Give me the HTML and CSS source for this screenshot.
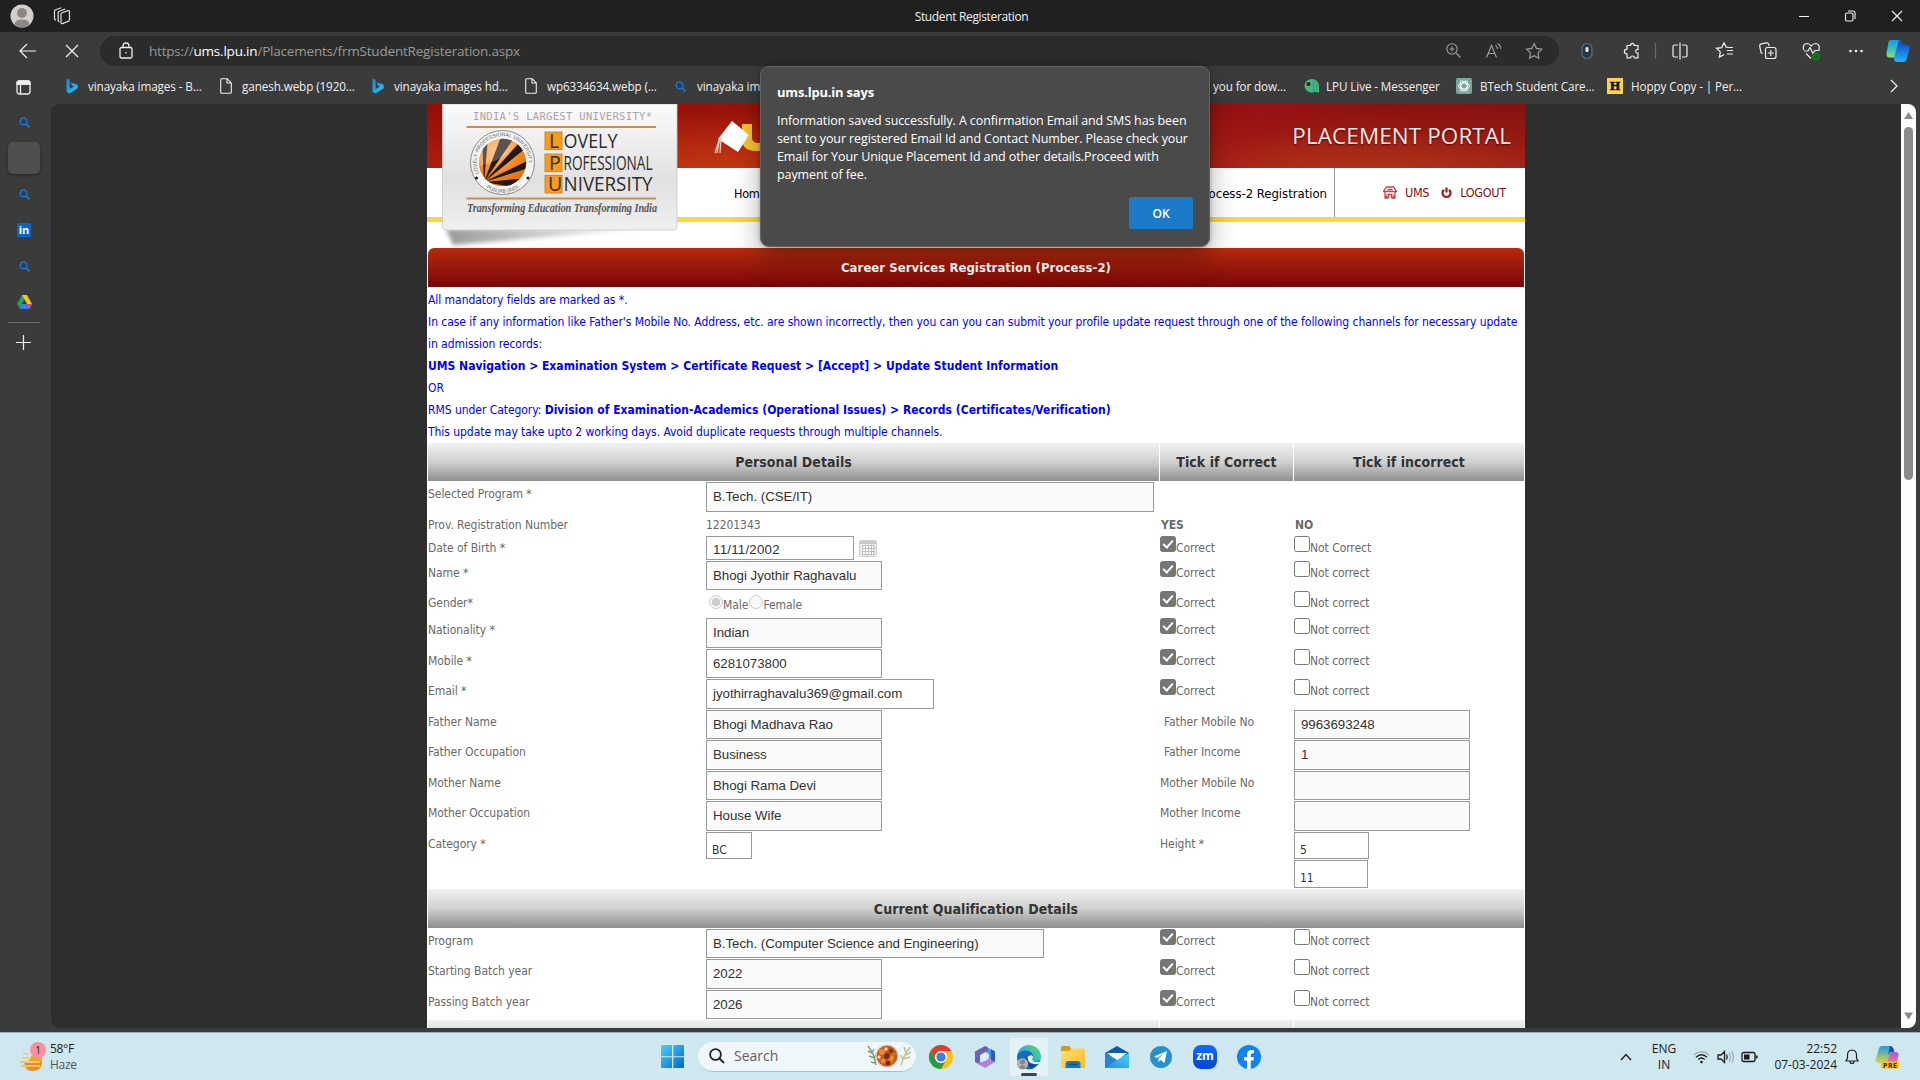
FILE: index.html
```html
<!DOCTYPE html>
<html lang="en">
<head>
<meta charset="utf-8">
<title>Student Registeration</title>
<link rel="stylesheet" href="styles.css">
</head>
<body>
<svg class="defs" width="0" height="0" aria-hidden="true">
  <defs>
    <linearGradient id="gBing" x1="0" y1="0" x2="1" y2="1"><stop offset="0" stop-color="#2a7de8"/><stop offset=".5" stop-color="#1fa4ee"/><stop offset="1" stop-color="#35d0f0"/></linearGradient>
    <linearGradient id="gCard" x1="0" y1="0" x2="0" y2="1"><stop offset="0" stop-color="#fcfbfc"/><stop offset=".6" stop-color="#e2e0e2"/><stop offset="1" stop-color="#f0f0f0"/></linearGradient>
    <radialGradient id="gBall" cx=".4" cy=".3" r=".8"><stop offset="0" stop-color="#ffbd75"/><stop offset=".5" stop-color="#f78a22"/><stop offset="1" stop-color="#e06406"/></radialGradient>
    <linearGradient id="gShade" x1="0" y1="0" x2="1" y2="0"><stop offset="0" stop-color="#777" stop-opacity=".75"/><stop offset="1" stop-color="#999" stop-opacity=".1"/></linearGradient>
    <linearGradient id="gWin" x1="0" y1="0" x2="1" y2="1"><stop offset="0" stop-color="#4cd0fb"/><stop offset="1" stop-color="#0069c8"/></linearGradient>
    <linearGradient id="gEdge" x1="0" y1="1" x2="1" y2="0"><stop offset="0" stop-color="#1173c9"/><stop offset=".5" stop-color="#27b3d9"/><stop offset="1" stop-color="#66dc52"/></linearGradient>
    <linearGradient id="gFold" x1="0" y1="0" x2="1" y2="1"><stop offset="0" stop-color="#ffdf74"/><stop offset="1" stop-color="#fbbb24"/></linearGradient>
    <linearGradient id="gMail" x1="0" y1="1" x2="1" y2="0"><stop offset="0" stop-color="#2b8ddd"/><stop offset="1" stop-color="#44d2fa"/></linearGradient>
    <linearGradient id="gCop" x1="0" y1="0" x2="0" y2="1"><stop offset="0" stop-color="#119de0"/><stop offset=".6" stop-color="#3fc6b5"/><stop offset="1" stop-color="#9fdc63"/></linearGradient>
    <linearGradient id="gCop2" x1="0" y1="0" x2="0" y2="1"><stop offset="0" stop-color="#1853d3"/><stop offset="1" stop-color="#25b3fa"/></linearGradient>
    <linearGradient id="gPre" x1="0" y1="0" x2="0" y2="1"><stop offset="0" stop-color="#1f9de0"/><stop offset="1" stop-color="#ddd33c"/></linearGradient>
    <linearGradient id="gPre2" x1="0" y1="0" x2="0" y2="1"><stop offset="0" stop-color="#a759ea"/><stop offset="1" stop-color="#ff6f84"/></linearGradient>
    <filter id="soft" x="-20%" y="-50%" width="140%" height="200%"><feGaussianBlur stdDeviation="2"/></filter>
    <symbol id="bing" viewBox="0 0 12 16"><path d="M.5.5 3.6 1.7V11L8 8.4 5.9 7.4 4.6 4.2 11.6 6.8V10.300L3.600 15.500.5 13.700Z" fill="url(#gBing)"/></symbol>
    <symbol id="doc" viewBox="0 0 12 16"><path d="M1.600.7h5.600l4.100 4.200v9.400q0 1-1 1H1.700q-1 0-1-1V1.700q0-1 .9-1ZM7 .9V5h4.200" fill="none" stroke="#eee" stroke-width="1.100"/></symbol>
    <symbol id="mag" viewBox="0 0 10 10"><circle cx="4.200" cy="4" r="3.100" fill="none" stroke="#1577d3" stroke-width="1.400"/><path d="M6.500 6.300 9.500 9.500" stroke="#1577d3" stroke-width="1.600"/></symbol>
  </defs>
</svg>

<header class="titlebar">
  <div class="tb-left">
    <svg width="24" height="24" viewBox="0 0 24 24"><circle cx="12" cy="12" r="11.500" fill="#d3d0cc"/><circle cx="12" cy="9" r="5" fill="#8b8784"/><path d="M4.500 20.500Q5 15.500 12 15.500t7.500 5Q12 26 4.500 20.500Z" fill="#8b8784"/></svg>
    <svg class="ws" width="18" height="18" viewBox="0 0 18 18" fill="none" stroke="#ddd" stroke-width="1.200"><path d="M8 7q0-1 1-1.300l6-2q1.500-.3 1.500 1.100v8q0 1-1 1.300l-6 2.500Q8 17 8 15.500Z"/><path d="M5.200 14.500V5.600q0-1 1-1.400l6-2.200M5.200 14.200l1.300.8"/><path d="M1.500 12.500V4.100q0-1 1-1.400L8.300.8M1.500 12.200l1.500 1"/></svg>
  </div>
  <div class="tb-title">Student Registeration</div>
  <svg class="winbtns" width="120" height="16" viewBox="0 0 120 16" fill="none" stroke="#f2f2f2" stroke-width="1.100"><path d="M9 8.500h10M102 3l10 10M112 3l-10 10"/><rect x="55.500" y="5" width="7.500" height="8" rx="1.500"/><path d="M58 3h5q2 0 2 2v6"/></svg>
</header>

<div class="toolbar">
  <svg class="navi" width="62" height="18" viewBox="0 0 62 18" fill="none" stroke="#f2f2f2" stroke-width="1.200"><path d="M17 9H1M8 2 1 9l7 7M47 3l12 12M59 3 47 15"/></svg>
  <div class="urlbar">
    <svg width="14" height="18" viewBox="0 0 14 18" fill="none" stroke="#eee" stroke-width="1.300"><rect x="1" y="5.500" width="12" height="10.500" rx="1.500"/><path d="M4 5.500V4q0-3 3-3t3 3v1.500"/><circle cx="7" cy="10.800" r=".8" fill="#eee" stroke="none"/></svg>
    <span class="url">https://<b>ums.lpu.in</b>/Placements/frmStudentRegisteration.aspx</span>
    <svg class="urlicons" width="98" height="18" viewBox="0 0 98 18" fill="none" stroke="#a0a0a0" stroke-width="1.100"><circle cx="7" cy="7" r="5.200"/><path d="M11 11l4.500 4.500M4.500 7h5M7 4.500v5"/><path d="M41.500 15.500 46.500 3.500l5 12M43 11.500h7M50.500 3.500q2 1.200 2 3.500M52.500 1.500q3.300 1.900 3.300 5.500"/><path d="m89.200 1.500 2.300 4.900 5.300.7-3.900 3.800 1 5.400-4.700-2.600-4.700 2.600 1-5.400-3.900-3.800 5.300-.7Z"/></svg>
  </div>
  <svg class="ext" width="345" height="26" viewBox="0 0 345 26" fill="none" stroke="#eee" stroke-width="1.200">
    <rect x="7" y="5.500" width="10" height="15" rx="5" fill="#29343e" stroke="#587284"/><rect x="10.500" y="9" width="3" height="5" rx="1" fill="#dce8f0" stroke="none"/>
    <path d="M52 7.500h3.500q0-2.200 1.800-2.200t1.800 2.200H63v3.800q-2.300 0-2.300 1.900T63 15v4.800h-3.600q0-1.800-1.900-1.800t-1.900 1.800H52V16q-2.600 0-2.600-2.400T52 11.200Z"/>
    <path d="M80.500 5v16" stroke="#6a6a6a"/>
    <path d="M103 7h-3.500q-1.500 0-1.500 1.500v9q0 1.500 1.500 1.500H103M107 7h3.500q1.500 0 1.500 1.500v9q0 1.500-1.500 1.500H107M105 4.500v17"/>
    <path d="M154 9.500l-2.800-.4-2.200-4.300-2.300 4.800-5.200.7 3.800 3.600-.9 5.200 4.600-2.500M152 12.500h6M152 16h6M154 9.500h4"/>
    <g transform="translate(4 0)"><path d="M183.500 15.500q-1.200 0-1.600-1.500l-1.200-6q-.3-1.800 1.500-2.200l5.500-.9q1.600-.2 2 1.300l.5 2"/><rect x="186.500" y="9.500" width="10.500" height="11" rx="2"/><path d="M191.800 12v6M188.800 15h6"/></g>
    <path d="M228.500 12q-1.200-6 3.300-6.500 3 0 4.500 2.500Q238 5.500 241 5.500q4.200.5 3 6.500M229 13h4l2-3.500 3 6 2-3h4.500M231 15.500l5 5"/><circle cx="241" cy="18.500" r="4" fill="#107c10" stroke="none"/><path d="m239.500 18.500 1.200 1.200 2-2.200" stroke="#083f08" stroke-width="1"/>
    <g fill="#eee" stroke="none"><circle cx="275.500" cy="13" r="1.300"/><circle cx="281" cy="13" r="1.300"/><circle cx="286.500" cy="13" r="1.300"/></g>
    <g stroke="none"><path d="M316 2h8q2.500.3 2 3l-3 12q-.8 2.500-3 2.500h-5.500q-3.500-.3-3-4L313.500 4q.6-2 2.500-2Z" fill="url(#gCop)"/><path d="M323 24q-4.500 0-4-4.500L322 9q.6-2.500 3-2.500h5q5 .3 4.500 4.500l-3 10.500q-.7 2.500-3 2.500Z" fill="url(#gCop2)"/><path d="M324 2q3 .3 3.400 4.500h-2.500q-2 .3-2.900 2.500Z" fill="#1b4bc9"/></g>
  </svg>
</div>

<nav class="bookmarks">
  <svg class="panel" width="15" height="15" viewBox="0 0 15 15" fill="none" stroke="#eee" stroke-width="1.300"><rect x="1" y="1" width="13" height="13" rx="2.500"/><path d="M1.500 4h12M4.500 4v10"/><path d="M1 4V3q0-2 2-2h9q2 0 2 2v1Z" fill="#eee"/></svg>
  <span class="bm b1"><svg width="12" height="16"><use href="#bing"/></svg>vinayaka images - B...</span>
  <span class="bm b2"><svg width="12" height="16"><use href="#doc"/></svg>ganesh.webp (1920...</span>
  <span class="bm b3"><svg width="12" height="16"><use href="#bing"/></svg>vinayaka images hd...</span>
  <span class="bm b4"><svg width="12" height="16"><use href="#doc"/></svg>wp6334634.webp (...</span>
  <span class="bm b5"><svg width="11" height="11"><use href="#mag"/></svg>vinayaka ima</span>
  <span class="bm b6">you for dow...</span>
  <span class="bm b7"><svg width="16" height="16" viewBox="0 0 16 16"><path d="M15 14.500V8a7.200 6.800 0 1 0-4 5.800Z" fill="#46b978"/><circle cx="4.500" cy="6" r="2" fill="#222"/><path d="M8 1.200A6.800 6.800 0 0 1 8 14.800Z" fill="#35a08b" opacity=".6"/></svg>LPU Live - Messenger</span>
  <span class="bm b8"><svg width="16" height="16" viewBox="0 0 16 16"><rect width="16" height="16" rx="2" fill="#74a99b"/><g fill="none" stroke="#fff" stroke-width=".9"><ellipse cx="8" cy="8" rx="5.500" ry="3"/><ellipse cx="8" cy="8" rx="5.500" ry="3" transform="rotate(60 8 8)"/><ellipse cx="8" cy="8" rx="5.500" ry="3" transform="rotate(120 8 8)"/></g></svg>BTech Student Care...</span>
  <span class="bm b9"><i class="hoppy">H</i>Hoppy Copy - | Per...</span>
  <svg class="more" width="8" height="14" viewBox="0 0 8 14" fill="none" stroke="#eee" stroke-width="1.300"><path d="m1 1 6 6-6 6"/></svg>
</nav>

<div class="middle">
  <aside class="side">
    <div class="s"><svg width="11" height="11"><use href="#mag"/></svg></div>
    <div class="s"><span class="active"></span></div>
    <div class="s"><svg width="11" height="11"><use href="#mag"/></svg></div>
    <div class="s"><span class="li">in</span></div>
    <div class="s"><svg width="11" height="11"><use href="#mag"/></svg></div>
    <div class="s"><svg width="15" height="14" viewBox="0 0 15 14"><path d="M5 0h5L2.500 13 0 9Z" fill="#20a45a"/><path d="M5 0h5l5 9h-5Z" fill="#fbc02a"/><path d="M4.500 9H15l-2.500 5h-10Z" fill="#3f7ee8"/><path d="M10.500 9H15l-2.300 4.500Z" fill="#e5483c"/></svg></div>
    <hr>
    <svg class="plus" width="15" height="15" viewBox="0 0 15 15" stroke="#eee" stroke-width="1.200"><path d="M7.500 0v15M0 7.500h15"/></svg>
  </aside>

  <div class="viewport">
    <main class="page">
      <div class="banner">
        <svg class="capart" width="60" height="50" viewBox="0 0 60 50"><path d="M30 14v15q0 12 14 12h10V33H46q-6 0-6-6V14Z" fill="#f8c42f"/><path d="m20 11 17 14-11 17L6 29Z" fill="#fff"/><path d="M8 27 3 43M8 28l-3 15M9 28 8 43" stroke="#f0c8bc" stroke-width="1.300"/></svg>
        <span class="portal">PLACEMENT PORTAL</span>
      </div>
      <div class="menu">
        <span class="home">Home</span>
        <span class="proc">Process-2 Registration</span>
        <div class="user">
          <svg width="14" height="13" viewBox="0 0 14 13" fill="none" stroke="#b9494c"><path d="M.5 5.500 3.500 1h7l3 4.500ZM2 5.500V12h3.500M12 5.500V12H8.500M5.500 12V8.500h3V12M3.500 8.500h1M9.500 8.500h1M4.500 3.500h5M2.500 10.500h2M9.500 10.500h2" stroke-width="1.300"/></svg>
          <span>UMS</span>
          <svg width="11" height="12" viewBox="0 0 11 12" fill="none" stroke="#a3171b" stroke-width="2.200"><path d="M3 2.800a4 4 0 1 0 5 0M5.500.5v5"/></svg>
          <span>LOGOUT</span>
        </div>
      </div>
      <svg class="logo" width="246" height="150" viewBox="0 0 246 150">
        <path d="M5 125H200L12 141Z" fill="url(#gShade)" filter="url(#soft)"/>
        <path d="M1.500 0H236V122q0 4-4 4H6q-4.500 0-4.500-4Z" fill="url(#gCard)" stroke="#c9c7c8" stroke-width=".8"/>
        <text x="32" y="16" class="lg-top" textLength="179">INDIA'S LARGEST UNIVERSITY*</text>
        <path d="M25.500 23H215M25.500 94.500H215" stroke="#cc8f45" stroke-width="2"/>
        <circle cx="61.500" cy="58.500" r="32" fill="#f4f4f4" stroke="#8a8a8a"/>
        <path id="ring" d="M38.100 69.500a26 26 0 1 1 46.800 0" fill="none"/>
        <path id="ring2" d="M44.500 83.500a30 30 0 0 0 34 0" fill="none"/>
        <text class="lg-ring"><textPath href="#ring">LOVELY PROFESSIONAL UNIVERSITY</textPath></text>
        <text class="lg-ring"><textPath href="#ring2" startOffset="1">PUNJAB (INDIA)</textPath></text>
        <clipPath id="ballc"><circle cx="61.500" cy="58.500" r="23.700"/></clipPath>
        <g clip-path="url(#ballc)"><circle cx="61.500" cy="58.500" r="24" fill="url(#gBall)"/><g fill="#231a15"><path d="M43 78 41 34 47 34Z"/><path d="M43 78 61 30 73 34Z"/><path d="M43 78 79 38 85 44Z"/><path d="M43 78 88 56V64Z"/><path d="M43 78 88 74V86Z"/></g><path d="M38 34h40Q72 54 38 62Z" fill="#fff" opacity=".25"/></g>
        <circle cx="35.500" cy="74" r="1.600" fill="#222"/><circle cx="87" cy="74" r="1.600" fill="#222"/>
        <g fill="#f79a1d" stroke="#c98a34"><rect x="104" y="28" width="17" height="17.500"/><rect x="104" y="50" width="17" height="17.500"/><rect x="104" y="71.500" width="17" height="17.500"/></g>
        <g class="lg-name"><text x="108" y="43.500">L</text><text x="108" y="65.500">P</text><text x="107" y="87">U</text>
        <text x="122.500" y="43.500" textLength="54" lengthAdjust="spacingAndGlyphs">OVELY</text><text x="122.500" y="65.500" textLength="89" lengthAdjust="spacingAndGlyphs">ROFESSIONAL</text><text x="122.500" y="87" textLength="89" lengthAdjust="spacingAndGlyphs">NIVERSITY</text></g>
        <text x="26" y="108" class="lg-tag" textLength="190" lengthAdjust="spacingAndGlyphs">Transforming Education Transforming India</text>
      </svg>

      <h1>Career Services Registration (Process-2)</h1>
      <div class="notes">
        <p>All mandatory fields are marked as *.</p>
        <p>In case if any information like Father's Mobile No. Address, etc. are shown incorrectly, then you can you can submit your profile update request through one of the following channels for necessary update</p>
        <p>in admission records:</p>
        <p><b>UMS Navigation &gt; Examination System &gt; Certificate Request &gt; [Accept] &gt; Update Student Information</b></p>
        <p>OR</p>
        <p>RMS under Category: <b>Division of Examination-Academics (Operational Issues) &gt; Records (Certificates/Verification)</b></p>
        <p>This update may take upto 2 working days. Avoid duplicate requests through multiple channels.</p>
      </div>

      <div class="bar three"><b>Personal Details</b><b>Tick if Correct</b><b>Tick if incorrect</b></div>
      <div class="row h32"><span>Selected Program *</span><div><span class="in w448 dis">B.Tech. (CSE/IT)</span></div></div>
      <div class="row h22"><span>Prov. Registration Number</span><span>12201343</span><b>YES</b><b>NO</b></div>
      <div class="row h25"><span>Date of Birth *</span><div><span class="in w148">11/11/2002</span><svg class="cal" width="18" height="17" viewBox="0 0 18 17" fill="none"><rect x=".5" y=".5" width="17" height="16" rx="1" fill="#ececec" stroke="#d0d0d0"/><path d="M1 2.500h16" stroke="#c8c8c8" stroke-width="3"/><path d="M3 5h12v9.500H3Z" fill="#fff"/><path d="M3 5.500h12M3 8.500h12M3 11.500h12M3 14.500h12M3.500 5v10M6.500 5v10M9.500 5v10M12.500 5v10M15 5v10" stroke="#b8b8b8" stroke-width=".9"/></svg></div><label class="ck on">Correct</label><label class="ck">Not Correct</label></div>
      <div class="row h30"><span>Name *</span><div><span class="in w176 dis">Bhogi Jyothir Raghavalu</span></div><label class="ck on">Correct</label><label class="ck">Not correct</label></div>
      <div class="row h27"><span>Gender*</span><div class="radios"><i class="rd sel"></i><span>Male</span><i class="rd"></i><span>Female</span></div><label class="ck on">Correct</label><label class="ck">Not correct</label></div>
      <div class="row h31"><span>Nationality *</span><div><span class="in w176 dis">Indian</span></div><label class="ck on">Correct</label><label class="ck">Not correct</label></div>
      <div class="row h30"><span>Mobile *</span><div><span class="in w176">6281073800</span></div><label class="ck on">Correct</label><label class="ck">Not correct</label></div>
      <div class="row h31"><span>Email *</span><div><span class="in w228">jyothirraghavalu369@gmail.com</span></div><label class="ck on">Correct</label><label class="ck">Not correct</label></div>
      <div class="row h30"><span>Father Name</span><div><span class="in w176 dis">Bhogi Madhava Rao</span></div><span class="ind">Father Mobile No</span><div><span class="in w176 dis">9963693248</span></div></div>
      <div class="row h31"><span>Father Occupation</span><div><span class="in w176 dis">Business</span></div><span class="ind">Father Income</span><div><span class="in w176 dis">1</span></div></div>
      <div class="row h30"><span>Mother Name</span><div><span class="in w176 dis">Bhogi Rama Devi</span></div><span>Mother Mobile No</span><div><span class="in w176 dis"></span></div></div>
      <div class="row h31"><span>Mother Occupation</span><div><span class="in w176 dis">House Wife</span></div><span>Mother Income</span><div><span class="in w176 dis"></span></div></div>
      <div class="row h58"><span>Category *</span><div><span class="in pick w46">BC</span></div><span>Height *</span><div class="stack"><span class="in pick w75">5</span><span class="in pick w74">11</span></div></div>
      <div class="bar one"><b>Current Qualification Details</b></div>
      <div class="row h30"><span>Program</span><div><span class="in w338 dis">B.Tech. (Computer Science and Engineering)</span></div><label class="ck on">Correct</label><label class="ck">Not correct</label></div>
      <div class="row h31"><span>Starting Batch year</span><div><span class="in w176 dis">2022</span></div><label class="ck on">Correct</label><label class="ck">Not correct</label></div>
      <div class="row h31"><span>Passing Batch year</span><div><span class="in w176 dis last">2026</span></div><label class="ck on">Correct</label><label class="ck">Not correct</label></div>
      <div class="bar three"><b></b><b></b><b></b></div>
    </main>
    <div class="scroll">
      <svg width="9" height="8" viewBox="0 0 9 8"><path d="M4.500 0 9 7H0Z" fill="#8b8b8b"/></svg>
      <div class="thumb"></div>
      <svg width="9" height="8" viewBox="0 0 9 8"><path d="M4.500 7.500 9 .5H0Z" fill="#8b8b8b"/></svg>
    </div>
  </div>
</div>

<section class="dialog">
  <h2>ums.lpu.in says</h2>
  <p>Information saved successfully. A confirmation Email and SMS has been<br>sent to your registered Email Id and Contact Number. Please check your<br>Email for Your Unique Placement Id and other details.Proceed with<br>payment of fee.</p>
  <button type="button">OK</button>
</section>

<footer class="taskbar">
  <div class="weather">
    <svg width="30" height="32" viewBox="0 0 30 32"><path d="M5 13h5M4 17h8" stroke="#f9cf62" stroke-width="2"/><path d="M6 21h18q0 9-10 9-7 0-8-9Z" fill="#ef8c1d"/><path d="M13 15h11v6H8q4-1 5-6Z" fill="#f3a52b"/><path d="M2 21h20M3 25h19" stroke="#f3c573" stroke-width="2"/><circle cx="20" cy="9" r="8" fill="#fb8f9d"/><text x="17.300" y="13" class="badge">1</text></svg>
    <div><span>58°F</span><small>Haze</small></div>
  </div>
  <svg class="start" width="24" height="24" viewBox="0 0 24 24"><path d="M0 1q0-1 1-1h10v11.300H0ZM12.300 0H22q1 0 1 1v10.300H12.300ZM0 12.300h11V23H1q-1 0-1-1ZM12.300 12.300H23V22q0 1-1 1h-9.700Z" fill="url(#gWin)"/></svg>
  <div class="search">
    <svg width="16" height="16" viewBox="0 0 16 16" fill="none" stroke="#252525" stroke-width="1.800"><circle cx="6.500" cy="6.500" r="5.400"/><path d="m10.500 10.500 4.500 4.500"/></svg>
    <span>Search</span>
    <svg class="dish" width="46" height="26" viewBox="0 0 46 26"><g stroke="#8a9a76" stroke-width="1.500" fill="none"><path d="M2 3q6 7 8 19M2 8l4 2M8 6 6 10M3 13l5 2M10 12l-2 3M5 19l4 1"/><path stroke="#b9c38a" d="M44 4q-6 8-9 18M45 9l-5 3M38 4l2 6M44 14l-7 2M35 12l2 5"/></g><circle cx="21" cy="13" r="11.500" fill="#d9c7b6"/><circle cx="21" cy="13" r="10.300" fill="#c75516"/><g fill="#f08a25"><circle cx="16" cy="9" r="3"/><circle cx="25" cy="15" r="3"/><circle cx="17" cy="18" r="2.500"/></g><g fill="#7a2c14"><circle cx="21" cy="13" r="3"/><circle cx="25" cy="8" r="2"/><circle cx="22" cy="20" r="2.300"/></g><g fill="#f4ddae"><circle cx="20" cy="6" r="1.700"/><circle cx="13" cy="14" r="1.700"/></g><g fill="#87a12c"><circle cx="28" cy="11" r="1.500"/><circle cx="26" cy="19" r="1.500"/></g></svg>
  </div>
  <div class="apps">
    <span><svg width="24" height="24" viewBox="0 0 24 24"><circle cx="12" cy="12" r="12" fill="#fbc116"/><path d="M1.600 6A12 12 0 0 1 22.400 6H12a6 6 0 0 0-5.200 9Z" fill="#e33b2e"/><path d="M1.600 6A12 12 0 0 0 12 24l5.200-9A6 6 0 0 1 6.800 15Z" fill="#2a9a48"/><circle cx="12" cy="12" r="6" fill="#fff"/><circle cx="12" cy="12" r="4.600" fill="#3a7cec"/></svg></span>
    <span><svg width="22" height="24" viewBox="0 0 22 24"><path d="M11 1 21 6.500V17l-6-3.500V9L9 5.500Z" fill="#3f9fe2"/><path d="M11 1 1 6.500V17l5 3V10l8-4.500V2.500Z" fill="#6d62b0"/><path d="M1.500 17.500 11 23l10-6v-1l-6-3.500-5 4-4 1Z" fill="#b77fd8"/><path d="M17 4.300 21 6.500V17l-4-2.300Z" fill="#2a5fb8"/><path d="M11 8.300 14.300 10.200V14L11 15.900 7.700 14V10.200Z" fill="#dbeef5"/></svg></span>
    <span class="cur"><svg width="26" height="26" viewBox="0 0 26 26"><circle cx="13" cy="13" r="12" fill="url(#gEdge)"/><path d="M1.200 14Q2 6.500 9.500 6.500q7 0 8 6.500-5-3.500-7.500 1-1.500 6 5 9l4 .5Q14 27 8 24 1.500 20 1.200 14Z" fill="#1769bd"/><path d="M10 14q2-4 6-2-2 4 1 5 4 2 7-1-3 8-9 8-7-4-5-10Z" fill="#0d4a91"/><path d="M11.500 13q3-3 5.500-.5-2 3.500 1 5 4 1.500 7-.8l-1.500 2.800q-5 1.500-9-.5-3-2-3-6Z" fill="#e4f2f7"/><circle cx="6.500" cy="20" r="5.700" fill="#b5b3b0"/><circle cx="6.500" cy="18" r="2.500" fill="#888"/><path d="M3 23.500q3.500-5 7 0-3.500 3-7 0Z" fill="#888"/></svg></span>
    <span><svg width="24" height="24" viewBox="0 0 24 24"><path d="M0 2.500Q0 1 1.500 1H8l2.500 3-2 3H0Z" fill="#d99b10"/><path d="M0 6h8l2.500-2.500H22.500Q24 3.500 24 5v18H0Z" fill="url(#gFold)"/><path d="M4.500 23v-4q0-3 3-3h9q3 0 3 3v4Z" fill="#1478c8"/><path d="M8 19.500h8" stroke="#0b4e8e" stroke-width="1.500"/></svg></span>
    <span><svg width="24" height="24" viewBox="0 0 24 24"><path d="M0 8 12 1l12 7v4H0Z" fill="#0e5aa8"/><path d="M2 8h20L12 16Z" fill="#f3f3f3"/><path d="M0 8l12 7 12-7v15H0Z" fill="url(#gMail)"/><path d="M12 15 0 23V8Z" fill="#2286d6"/></svg></span>
    <span><svg width="22" height="22" viewBox="0 0 22 22"><circle cx="11" cy="11" r="10.800" fill="#2492cf" stroke="#4c7c94" stroke-width=".5"/><path d="M4 10.500 17 5l-2.500 12-4-3-2 2v-3.500L14 7.500l-7 4.500Z" fill="#fff"/></svg></span>
    <span><i class="zm">zm</i></span>
    <span><svg width="24" height="24" viewBox="0 0 24 24"><circle cx="12" cy="12" r="12" fill="#1283ee"/><path d="M10 24V15.500H7V12h3V9.500Q10 5 14.500 5l2.500.2v3.100h-1.500q-1.800 0-1.800 1.800V12H17l-.5 3.500h-2.800V24Z" fill="#fff"/></svg></span>
  </div>
  <div class="tray">
    <svg width="12" height="8" viewBox="0 0 12 8" fill="none" stroke="#222" stroke-width="1.500"><path d="m1 7 5-5.500L11 7"/></svg>
    <div class="lang">ENG<br>IN</div>
    <svg class="sys" width="66" height="16" viewBox="0 0 66 16" fill="none" stroke="#1d1d1d" stroke-width="1.300"><path d="M1 6q7.500-6.500 15 0" stroke="#9fb2ba"/><path d="M3 8.200q5.500-5 11 0M5.300 10.500q3.200-3 6.400 0"/><circle cx="8.500" cy="13" r="1.300" fill="#1d1d1d" stroke="none"/><path d="M25 6h3l3.500-3.500v11L28 10h-3ZM33.500 5.500q1.500 2.500 0 5"/><path d="M36 3.500q3 4.500 0 9M38.500 2q4 6 0 12" stroke="#9fb2ba"/><rect x="49" y="3.500" width="13" height="9" rx="2"/><rect x="51" y="5.500" width="5.500" height="5" fill="#1d1d1d" stroke="none"/><path d="M63.500 6.500v3" stroke-width="2"/></svg>
    <div class="clock">22:52<br>07-03-2024</div>
    <svg class="bell" width="14" height="16" viewBox="0 0 14 16" fill="none" stroke="#222" stroke-width="1.200"><path d="M1 12 2.500 9V6q0-4.800 4.500-5 4.500.2 4.500 5v3L13 12ZM5 12.500q0 2 2 2t2-2"/></svg>
    <svg class="pre" width="25" height="24" viewBox="0 0 25 24"><path d="M7 1h8q3 .5 2 3l-3.500 12q-1 2-3.500 2H4q-4-.5-3-4L4 3q1-2 3-2Z" fill="url(#gPre)"/><path d="M15 1q4 .5 4 6h-4l-2 3Z" fill="#1b45c4"/><path d="M12 18 15 8.500Q15.500 7 17.500 7H21q3 .3 2.500 3.500L22 18Z" fill="url(#gPre2)"/><rect x="6" y="16.500" width="18" height="7" rx="1.500" fill="#fcc40e"/><text x="8" y="22.500" class="pret" textLength="14">PRE</text></svg>
  </div>
</footer>
</body>
</html>
```
FILE: styles.css
```css
* { box-sizing: border-box; }
html, body { margin: 0; height: 100%; }
body {
  width: 1920px; height: 1080px; overflow: hidden; position: relative;
  display: flex; flex-direction: column;
  background: #3b3b3b; color: #f0f0f0;
  font: 12px/16px "Open Sans", "Noto Sans", sans-serif;
}
svg { display: block; flex: none; }
.defs { position: absolute; }
i { font-style: normal; }

/* browser frame */
.titlebar { height: 32px; flex: none; background: #202020; display: grid; grid-template-columns: 900px 143px 1fr; align-items: center; }
.tb-left { display: flex; align-items: center; padding-left: 10px; gap: 19px; }
.tb-title { text-align: center; letter-spacing: -.35px; white-space: nowrap; padding-top: 2px; }
.winbtns { justify-self: end; margin-right: 10px; }
.toolbar { height: 38px; flex: none; display: flex; padding: 4px 0; align-items: flex-start; }
.navi { margin: 6px 10px 0 19px; }
.urlbar { width: 1459px; height: 30px; border-radius: 15px; background: #2b2b2b; display: flex; align-items: center; padding-left: 19px; margin-left: 9px; }
.url { margin-left: 16px; color: #999; font-size: 13.500px; letter-spacing: -.2px; white-space: nowrap; }
.url b { font-weight: 400; color: #fff; }
.urlicons { margin: 0 16px 0 auto; }
.ext { margin: 2px 0 0 16px; }
.bookmarks { height: 34px; flex: none; display: flex; align-items: center; padding-bottom: 2px; font-size: 11.700px; letter-spacing: -.1px; }
.panel { margin: 3px 28px 0 16px; }
.more { margin: 0 22px 0 auto; }
.bm { display: flex; align-items: center; gap: 10px; white-space: nowrap; overflow: hidden; height: 24px; flex: none; padding-left: 7px; }
.b1 { width: 154px; }
.b2 { width: 152px; }
.b3 { width: 153px; }
.b4 { width: 154px; }
.b5 { width: 100px; gap: 11px; padding-left: 3px; }
.b6 { width: 76px; margin-left: 441px; padding: 0; }
.b7 { width: 154px; margin-left: 13px; gap: 6px; padding-left: 2px; }
.b8 { width: 151px; gap: 8px; padding: 0; }
.b9 { width: 140px; gap: 8px; padding: 0; }
.hoppy { width: 16px; height: 16px; background: #fcd34d; color: #111; font: 700 13px/16px "Liberation Serif", serif; text-align: center; -webkit-text-stroke: .6px #111; }
.middle { height: 928px; flex: none; display: flex; }
.side { width: 51px; display: flex; flex-direction: column; padding-right: 3px; }
.s { height: 36px; display: flex; align-items: center; justify-content: center; }
.active { width: 32px; height: 32px; background: #4f4f4f; border-radius: 5px; box-shadow: 0 1px 3px #222; }
.li { width: 14px; height: 14px; border-radius: 1px; background: #0a66c2; color: #fff; font: 700 11px/14px "Open Sans", sans-serif; text-align: center; }
.side hr { width: 32px; height: 1px; border: 0; background: #6a6a6a; margin: 2px 0 12px 8px; }
.plus { margin-left: 16px; }
.viewport { width: 1865px; height: 924px; background: #2e2e2e; border-radius: 8px 8px 8px 8px; overflow: hidden; display: flex; }
.scroll { width: 15px; margin-left: auto; background: #fcfcfc; display: flex; flex-direction: column; align-items: center; justify-content: space-between; padding: 8px 0; }
.thumb { width: 9px; height: 353px; border-radius: 5px; background: #8b8b8b; margin: 7px 0 auto; }

/* portal page */
.page { width: 1098px; margin-left: 376px; background: #fff; color: #696969; position: relative; font: 12px/16px "DejaVu Sans Condensed", "DejaVu Sans", sans-serif; letter-spacing: -.05px; }
.banner { height: 64px; display: flex; justify-content: space-between; padding: 0 14px 0 285px; background: radial-gradient(ellipse 230px 60px at 28% 110%, #d2481699, transparent), radial-gradient(ellipse 200px 50px at 86% 110%, #b8441d88, transparent), linear-gradient(135deg, transparent 66%, #a0101a66 74%, transparent 80%), linear-gradient(to bottom, #86080888, #b82a1088), linear-gradient(to right, #a01009, #b0200c 40%, #9a1c18 75%, #861b1a); }
.capart { margin-top: 6px; }
.portal { font: 22.400px/28px "Open Sans", "Noto Sans", sans-serif; letter-spacing: .15px; color: #f6e9e6; padding-top: 18px; white-space: nowrap; text-shadow: 0 1px 2px #500; }
.menu { height: 54px; border-bottom: 5px solid #fbd744; display: flex; color: #000; font-size: 12.500px; line-height: 51px; letter-spacing: -.3px; }
.home { margin-left: 307px; width: 40px; }
.proc { margin-left: auto; padding-right: 7px; border-right: 1px solid #999; white-space: nowrap; font-size: 13px; letter-spacing: -.02px; }
.user { width: 190px; display: flex; align-items: center; padding-left: 48px; color: #8d0a0d; }
.user span { margin: 0 12px 0 8px; }
.logo { position: absolute; left: 14px; top: 0; overflow: visible; }
.lg-top { font: 10.500px "DejaVu Sans Mono", monospace; fill: #a5a5a5; letter-spacing: 0; }
.lg-ring { font: 5.200px "Liberation Sans", sans-serif; fill: #666; letter-spacing: 0; }
.lg-name { font: 19.500px "Open Sans", sans-serif; fill: #2c2c2c; letter-spacing: 0; }
.lg-tag { font: italic 700 11.500px "Liberation Serif", serif; fill: #555; }
h1 { margin: 26px 1px 0; height: 39px; border-radius: 6px 6px 0 0; background: linear-gradient(#b82b0f, #760607); color: #fff; text-align: center; font: 700 13px/39px "DejaVu Sans Condensed", sans-serif; letter-spacing: .05px; }
.notes { height: 156px; padding: 2px 1px 0; color: #00f; }
.notes p { margin: 0; line-height: 22px; white-space: nowrap; }
.notes b { letter-spacing: .02px; }
.bar { margin: 0 1px; color: #333; font-size: 14px; letter-spacing: .04px; display: grid; gap: 1px; text-align: center; }
.bar b { background: linear-gradient(#f2f2f2, #d0d0d0 50%, #8e8e8e); height: 38px; line-height: 38px; }
.three { grid-template-columns: 731px 133px 230px; }
.one b { height: 39px; line-height: 40px; }
.row { display: grid; grid-template-columns: 278px 454px 134px 230px; padding: 0 1px; align-items: start; }
.row > span, .row > b { padding-top: 5px; }
.row > b { padding-left: 1px; }
.row > .ind { padding-left: 4px; }
.h22 { height: 22px; } .h25 { height: 25px; } .h27 { height: 27px; } .h30 { height: 30px; } .h31 { height: 31px; } .h32 { height: 32px; } .h58 { height: 58px; }
.h22 > span, .h22 > b { padding-top: 4px; }
.row > div { display: flex; }
.in { display: block; margin-top: 1px; height: 30px; border: 1px solid #999; background: #fff; color: #333; font: 13.300px/28px "Liberation Sans", sans-serif; letter-spacing: -.03px; padding-left: 6px; white-space: nowrap; }
.h30 .in, .last { height: 29px; }
.h25 .in { height: 24px; line-height: 25px; letter-spacing: .22px; }
.dis { background: #fafafa; }
.row > .stack { flex-direction: column; }
.in.pick { height: 27px; padding: 7px 0 0 5px; font: 12px/20px "DejaVu Sans Condensed", sans-serif; }
.pick + .in.pick { height: 28px; }
.w448 { width: 448px; } .w148 { width: 148px; } .w176 { width: 176px; } .w228 { width: 228px; } .w338 { width: 338px; } .w46 { width: 46px; } .w75 { width: 75px; } .w74 { width: 74px; }
.cal { margin: 5px 0 0 5px; }
.radios { padding: 5px 0 0 2px; }
.radios span { padding-top: 2px; }
.rd { width: 14px; height: 14px; border: 1px solid #ccc; border-radius: 50%; margin: 0 0 0 1px; background: #f8f8f8; }
.rd.sel { background: radial-gradient(circle, #ccc 4px, #f8f8f8 4.500px); }
.ck { display: flex; padding-top: 5px; white-space: nowrap; position: relative; }
.ck::before { content: ""; width: 14px; height: 14px; margin: -4px 0 0 0; border: 1px solid #767676; border-radius: 2.500px; }
.ck.on::before { background: #767676; }
.ck.on::after { content: ""; position: absolute; left: 5px; top: 3px; width: 4px; height: 8px; border: solid #fff; border-width: 0 2px 2px 0; transform: rotate(42deg); }

/* message box */
.dialog { position: absolute; left: 760px; top: 66px; width: 450px; height: 181px; padding: 16px 16px; background: #4a4a4a; border: 1px solid #646464; border-radius: 9px; box-shadow: 0 12px 28px rgba(0,0,0,.3), 0 0 4px rgba(0,0,0,.3); color: #fff; display: flex; flex-direction: column; }
.dialog h2 { margin: 0; font-size: 13px; line-height: 18px; letter-spacing: -.2px; }
.dialog p { margin: 11px 0 13px; font-size: 12.500px; line-height: 18px; letter-spacing: -.1px; white-space: nowrap; }
.dialog button { align-self: flex-end; width: 64px; height: 32px; flex: none; border: 0; border-radius: 3px; background: #1c7bc9; color: #fff; font: 600 12px "Open Sans", sans-serif; }

/* taskbar */
.taskbar { height: 48px; flex: none; background: #cfe7ee; border-top: 1px solid #9eb0b5; display: flex; align-items: center; color: #1c1c1c; }
.weather { width: 661px; display: flex; padding-left: 18px; gap: 2px; font-size: 12px; letter-spacing: -.3px; }
.weather div { display: flex; flex-direction: column; }
.weather small { font-size: 12px; color: #555; }
.badge { font: 10px "Open Sans", sans-serif; fill: #222; }
.search { width: 218px; height: 30px; margin-left: 13px; border-radius: 15px; background: #f0f7fa; border-bottom: 1px solid #a9c0c8; display: flex; align-items: center; padding-left: 11px; font-size: 14px; color: #606060; }
.search span { margin-left: 9px; }
.dish { margin: 0 4px 0 auto; }
.apps { display: flex; margin-left: 3px; }
.apps span { width: 44px; height: 46px; display: flex; align-items: center; justify-content: center; }
.cur { position: relative; background: linear-gradient(#e4f2f7, #e4f2f7) center / 38px 38px no-repeat; }
.cur::after { content: ""; position: absolute; left: 14px; bottom: 4px; width: 16px; height: 3px; border-radius: 2px; background: #444; }
.zm { width: 24px; height: 24px; border-radius: 8px; background: linear-gradient(#0b6cff, #0745cf); color: #fff; font: 700 12px/21px "Open Sans", sans-serif; text-align: center; }
.tray { display: flex; align-items: center; margin-left: auto; width: 300px; font-size: 12px; }
.lang { width: 40px; text-align: center; margin-left: 12px; }
.sys { margin-left: 9px; }
.clock { width: 78px; text-align: right; white-space: nowrap; }
.bell { margin-left: 8px; }
.pre { margin-left: 16px; }
.pret { font: 700 7px "Open Sans", sans-serif; fill: #222; }
```
